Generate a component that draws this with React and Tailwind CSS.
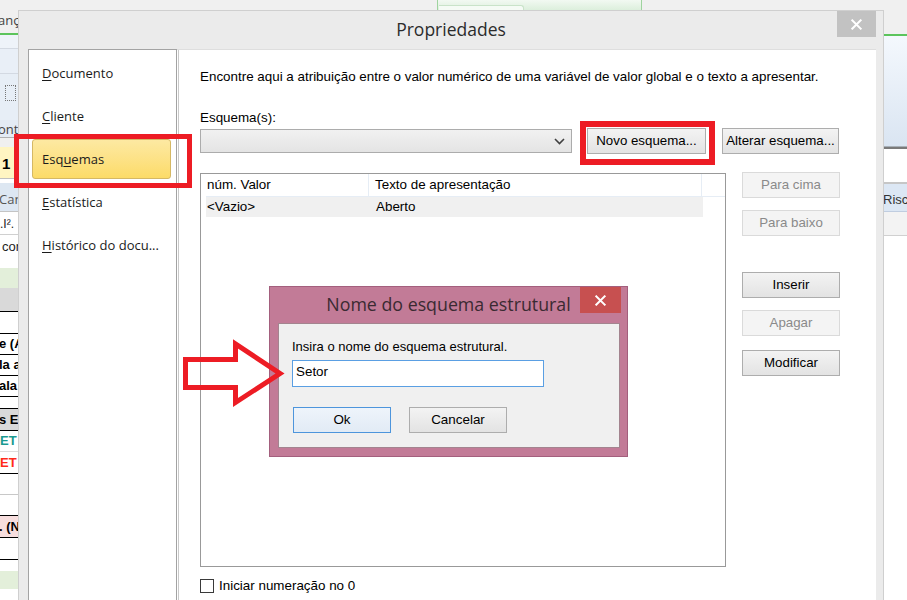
import React from "react";

const AR = "font-['Liberation_Sans',Arial,sans-serif]";
const SG = "font-['Open_Sans','Noto_Sans',sans-serif]";

function Btn({ children, w = "w-[98px]", disabled, extra = "" }) {
  const tone = disabled
    ? "bg-[#f4f4f4] border-[#dadada] text-[#8a8a8a]"
    : "bg-gradient-to-b from-[#f3f3f3] to-[#e3e3e3] border-[#adadad] text-black";
  return (
    <div className={`${w} h-[26px] shrink-0 flex items-center justify-center border text-[13.3px] ${AR} ${tone} ${extra}`}>
      {children}
    </div>
  );
}

function CloseX({ size = 12 }) {
  return (
    <svg width={size} height={size} viewBox="0 0 12 12">
      <path d="M1.5 1.5 L10.5 10.5 M10.5 1.5 L1.5 10.5" stroke="white" strokeWidth="2.2" strokeLinecap="square" />
    </svg>
  );
}

function LeftStrip() {
  const t = `${AR} text-[13px] whitespace-nowrap font-bold text-black -ml-[1px]`;
  return (
    <div className="w-[18px] h-[600px] shrink-0 flex flex-col overflow-hidden">
      <div className="h-[33px] bg-[#f0f0f0] flex items-start pt-[11px]">
        <span className={`${SG} text-[13px] leading-[18px] text-[#444] whitespace-nowrap -ml-[2px]`}>ança</span>
      </div>
      <div className="h-[2px] bg-[#5cc45c]" />
      <div className="h-[13px] bg-[#eef3f9]" />
      <div className="h-[1px] bg-[#d3d9e2]" />
      <div className="h-[24px] bg-[#e9eff7]" />
      <div className="h-[1px] bg-[#d3d9e2]" />
      <div className="h-[46px] bg-[#e7eef6] flex items-start pt-[11px] pl-[5px]">
        <div className="w-[11px] h-[16px] border border-dotted border-[#777]" />
      </div>
      <div className="h-[17px] bg-[#e4ebf4] flex items-end">
        <span className={`${SG} text-[13px] leading-[16px] text-[#444] whitespace-nowrap -ml-[2px]`}>ont:</span>
      </div>
      <div className="h-[1px] bg-[#b0b0b0]" />
      <div className="h-[9px] bg-[#f0f0f0]" />
      <div className="h-[31px] bg-[#fff5c2] flex items-center pl-[2px] pt-[3px]">
        <span className={`${AR} text-[15px] font-bold`}>1</span>
      </div>
      <div className="h-[1px] bg-[#c0c0c0]" />
      <div className="h-[4px] bg-white" />
      <div className="h-[28px] bg-[#dde7f2] flex items-center pt-[6px]">
        <span className={`${SG} text-[13px] text-[#555] whitespace-nowrap -ml-[1px]`}>Can</span>
      </div>
      <div className="h-[1px] bg-[#c4c4c4]" />
      <div className="h-[22px] bg-white flex items-start pt-[3px]">
        <span className={`${AR} text-[12px] text-[#222] whitespace-nowrap`}>.I².</span>
      </div>
      <div className="h-[1px] bg-[#d0d0d0]" />
      <div className="h-[21px] bg-white flex items-start pt-[2px] pl-[2px]">
        <span className={`${AR} text-[13px] text-[#222] whitespace-nowrap`}>com</span>
      </div>
      <div className="h-[12px] bg-white" />
      <div className="h-[20px] bg-[#e3efda]" />
      <div className="h-[23px] bg-[#d9d9d9]" />
      <div className="h-[1px] bg-black" />
      <div className="h-[21px] bg-white" />
      <div className="h-[1px] bg-black" />
      <div className="h-[20px] bg-white flex items-center"><span className={t}>e (Alfa)</span></div>
      <div className="h-[1px] bg-black" />
      <div className="h-[20px] bg-white flex items-center"><span className={t}>la a</span></div>
      <div className="h-[1px] bg-black" />
      <div className="h-[20px] bg-white flex items-center"><span className={t}>ala</span></div>
      <div className="h-[1px] bg-black" />
      <div className="h-[11px] bg-white" />
      <div className="h-[1px] bg-black" />
      <div className="h-[21px] bg-[#d9d9d9] flex items-center"><span className={t}>s ET</span></div>
      <div className="h-[1px] bg-black" />
      <div className="h-[20px] bg-white flex items-center"><span className={`${AR} text-[13px] font-bold text-[#1a9a90] whitespace-nowrap`}>ET</span></div>
      <div className="h-[1px] bg-[#ddd]" />
      <div className="h-[21px] bg-white flex items-center"><span className={`${AR} text-[13px] font-bold text-[#ff2a1a] whitespace-nowrap`}>ET</span></div>
      <div className="h-[1px] bg-black" />
      <div className="h-[20px] bg-white" />
      <div className="h-[1px] bg-[#c8c8c8]" />
      <div className="h-[20px] bg-white" />
      <div className="h-[1px] bg-black" />
      <div className="h-[21px] bg-[#f7dede] flex items-center"><span className={t}>. (N</span></div>
      <div className="h-[1px] bg-black" />
      <div className="h-[21px] bg-white" />
      <div className="h-[1px] bg-black" />
      <div className="h-[11px] bg-white" />
      <div className="h-[18px] bg-[#e3efda]" />
      <div className="flex-1 bg-white" />
    </div>
  );
}

function RightStrip() {
  return (
    <div className="w-[24px] h-[600px] shrink-0 flex flex-col overflow-hidden">
      <div className="h-[34px] bg-[#f0f0f0]" />
      <div className="h-[2px] bg-[#5cc45c]" />
      <div className="h-[110px] bg-gradient-to-b from-[#f4f8fd] to-[#dae5f2]" />
      <div className="h-[1px] bg-[#a8b0b8]" />
      <div className="h-[2px] bg-[#7a7a7a]" />
      <div className="h-[33px] bg-white" />
      <div className="h-[2px] bg-[#c6c6c6]" />
      <div className="h-[27px] bg-[#dce7f4] flex items-center pt-[4px]">
        <span className={`${AR} text-[13px] text-[#333] whitespace-nowrap`}>Risco</span>
      </div>
      <div className="h-[1px] bg-[#c0cde0]" />
      <div className="h-[23px] bg-[#f3f3f3]" />
      <div className="h-[1px] bg-[#d0d0d0]" />
      <div className="flex-1 bg-white" />
    </div>
  );
}

const navItems = [
  { pre: "", u: "D", post: "ocumento" },
  { pre: "", u: "C", post: "liente" },
  { pre: "Esq", u: "u", post: "emas", sel: true },
  { pre: "", u: "E", post: "statística" },
  { pre: "", u: "H", post: "istórico do docu..." },
];

export default function App() {
  return (
    <div className="relative w-[907px] h-[600px] overflow-hidden bg-white">
      {/* background application */}
      <div className="flex w-full h-full">
        <LeftStrip />
        <div className="flex-1 flex flex-col">
          <div className="h-[10px] bg-[#f0f0f0] flex">
            <div className="w-[419px]" />
            <div className="w-[205px] h-[10px] border-l border-r border-[#9fd39f] bg-gradient-to-b from-[#f2f9f2] to-[#dcefdc] flex">
              <div className="w-[85px] h-[10px] mt-[5px] ml-[1px] border-t border-r border-[#c9e3c9] rounded-tr-[3px] bg-[#f5fbf5]" />
            </div>
          </div>
          <div className="flex-1 bg-white" />
        </div>
        <RightStrip />
      </div>

      {/* Propriedades dialog */}
      <div className="absolute left-[18px] top-[10px] w-[866px] h-[600px] bg-[#ebebeb] border border-[#cfcfcf] flex flex-col">
        <div className="h-[38px] shrink-0 relative flex items-center justify-center">
          <span className={`${SG} text-[17.5px] text-[#2b2b2b] pb-[1px]`}>Propriedades</span>
          <div className="absolute right-[7px] top-0 w-[39px] h-[26px] bg-[#c2c2c2] flex items-center justify-center">
            <CloseX size={11} />
          </div>
        </div>
        <div className="flex-1 ml-[9px] mr-[7px] bg-white flex border-t border-[#dedede]">
          {/* nav */}
          <div className="w-[149px] shrink-0 border-l border-t border-r border-[#a3a3a3] -mt-[1px] pt-[3px] flex flex-col gap-[3px]">
            {navItems.map((it, i) => (
              <div
                key={i}
                className={`w-[139px] h-[40px] ml-[3px] flex items-center pl-[9px] pt-[1px] ${SG} text-[13px] text-[#1b1b1b] ${it.sel ? "bg-gradient-to-b from-[#fde9a2] to-[#fcdb67] border border-[#d5b864] rounded-[3px]" : "border border-transparent"}`}
              >
                <span className="whitespace-nowrap">
                  {it.pre}
                  <span className="underline underline-offset-2">{it.u}</span>
                  {it.post}
                </span>
              </div>
            ))}
          </div>
          <div className="w-[1px] bg-white" />
          <div className={`flex-1 border-l border-[#c9c9c9] pl-[21px] pt-[19px] flex flex-col ${AR} text-[13.4px] text-black`}>
            <div className="leading-[16px] whitespace-nowrap">
              Encontre aqui a atribuição entre o valor numérico de uma variável de valor global e o texto a apresentar.
            </div>
            <div className="leading-[16px] mt-[25px]">Esquema(s):</div>
            <div className="mt-[2px] h-[26px] flex items-center">
              <div className="w-[372px] h-[24px] border border-[#acacac] bg-gradient-to-b from-[#f1f1f1] to-[#e4e4e4] flex items-center justify-end pr-[6px]">
                <svg width="11" height="7" viewBox="0 0 11 7">
                  <polyline points="1,1 5.5,5.5 10,1" fill="none" stroke="#404040" strokeWidth="1.6" />
                </svg>
              </div>
              <Btn w="w-[119px]" extra="ml-[15px]">Novo esquema...</Btn>
              <Btn w="w-[117px]" extra="ml-[16px]">Alterar esquema...</Btn>
            </div>
            <div className="mt-[19px] flex items-start">
              <div className="w-[526px] h-[394px] border border-[#999] bg-white pl-[5px] flex flex-col">
                <div className="h-[23px] flex border-b border-[#e6edf5]">
                  <div className="w-[163px] border-r border-[#e6edf5] flex items-center pl-[1px] pt-[1px]">núm. Valor</div>
                  <div className="w-[333px] border-r border-[#e6edf5] flex items-center pl-[6px] pt-[1px]">Texto de apresentação</div>
                </div>
                <div className="w-[497px] h-[20px] bg-[#f0f0f0] flex items-center">
                  <div className="w-[163px] pl-[1px]">&lt;Vazio&gt;</div>
                  <div className="pl-[7px]">Aberto</div>
                </div>
              </div>
              <div className="ml-[16px] flex flex-col -mt-[1px]">
                <Btn disabled>Para cima</Btn>
                <Btn disabled extra="mt-[12px]">Para baixo</Btn>
                <Btn extra="mt-[36px]">Inserir</Btn>
                <Btn disabled extra="mt-[12px]">Apagar</Btn>
                <Btn extra="mt-[14px]">Modificar</Btn>
              </div>
            </div>
            <div className="mt-[13px] flex items-center -translate-y-[1px]">
              <div className="w-[14px] h-[14px] border border-[#3a3a3a] bg-white" />
              <span className="ml-[5px] leading-[14px]">Iniciar numeração no 0</span>
            </div>
          </div>
        </div>
      </div>

      {/* Nome do esquema estrutural dialog */}
      <div className="absolute left-[269px] top-[286px] w-[359px] h-[171px] bg-[#c27b97] border border-[#a35f7d] flex flex-col">
        <div className="h-[36px] shrink-0 relative flex items-center justify-center">
          <span className={`${SG} text-[17.8px] text-[#3a2a32] pb-[2px]`}>Nome do esquema estrutural</span>
          <div className="absolute right-[6px] top-0 w-[41px] h-[26px] bg-[#c75050] flex items-center justify-center">
            <CloseX size={11} />
          </div>
        </div>
        <div className={`flex-1 ml-[8px] mr-[7px] mb-[8px] bg-[#f0f0f0] border border-[#a3848f] pl-[13px] pt-[15px] flex flex-col ${AR} text-[13px] text-black`}>
          <div className="leading-[16px]">Insira o nome do esquema estrutural.</div>
          <div className="mt-[5px] w-[252px] h-[27px] bg-white border border-[#5a9fe3] flex items-center pl-[3px] pb-[2px] text-[13.4px]">Setor</div>
          <div className="mt-[20px] flex">
            <div className="w-[98px] h-[26px] ml-[1px] border border-[#4d95dc] bg-gradient-to-b from-[#eef4fb] to-[#e2ebf5] flex items-center justify-center text-[13.4px]">Ok</div>
            <div className="w-[98px] h-[26px] ml-[18px] border border-[#adadad] bg-gradient-to-b from-[#f3f3f3] to-[#e3e3e3] flex items-center justify-center text-[13.4px]">Cancelar</div>
          </div>
        </div>
      </div>

      {/* red annotations */}
      <div className="absolute left-[14px] top-[134px] w-[178px] h-[54px] border-[5px] border-[#ed1c24]" />
      <div className="absolute left-[580px] top-[121px] w-[135px] h-[44px] border-[6px] border-[#ed1c24]" />
      <svg className="absolute left-0 top-0" width="907" height="600" viewBox="0 0 907 600">
        <polygon
          points="185.5,359.5 235.5,359.5 235.5,344 280,373.5 235.5,402.5 235.5,387.5 185.5,387.5"
          fill="none"
          stroke="#ed1c24"
          strokeWidth="5"
          strokeLinejoin="miter"
        />
      </svg>
    </div>
  );
}
